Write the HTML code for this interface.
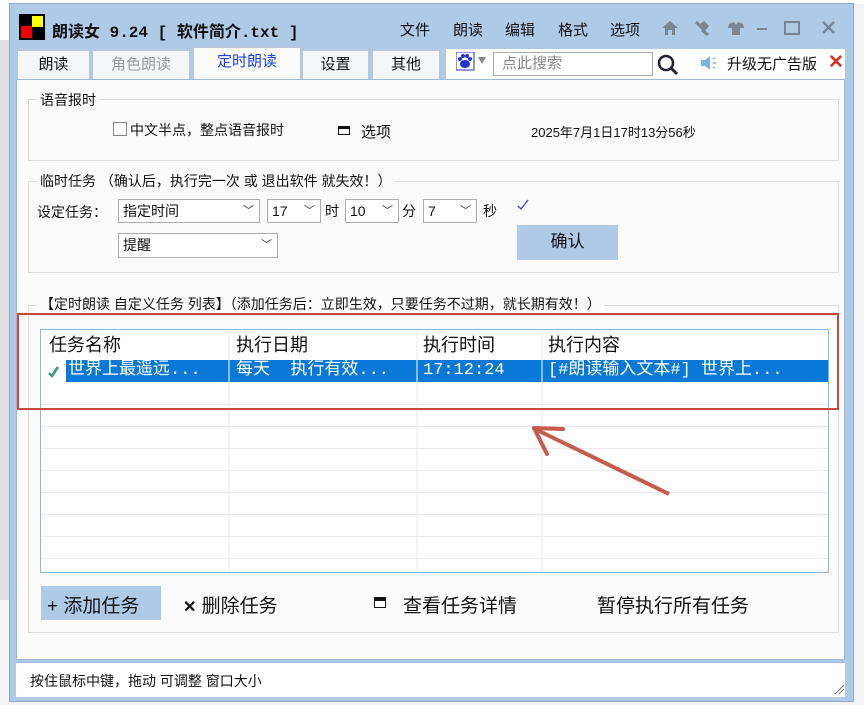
<!DOCTYPE html><html><head><meta charset="utf-8"><style>
*{margin:0;padding:0;box-sizing:border-box}
body{width:864px;height:705px;overflow:hidden;background:#f3f3f3;font-family:"Liberation Sans","Noto Sans CJK SC",sans-serif;font-size:15px;color:#111;position:relative}
.a{position:absolute;white-space:nowrap}
.win{left:9px;top:3px;width:845px;height:699px;background:#afcae7;border:1px solid #8fa9c6}
.panel{left:16px;top:79px;width:829px;height:581px;background:#fbfbfb;border:1px solid #9ab8d8}
.tab{top:50px;height:29px;background:#f4f6f9;border:1px solid #b8c8da;border-bottom:none;text-align:center;line-height:28px;font-size:15px}
.grp{border:1px solid #dcdcdc}
.gt{background:#fbfbfb;padding:0 3px;font-size:14px}
.sel{height:24px;background:#fff;border:1px solid #adadad;font-size:14px;line-height:22px;padding-left:4px}
.sel i{position:absolute;right:5px;top:0;font-style:normal;font-size:11px;color:#333}
.mono{font-family:"Liberation Mono","Noto Sans CJK SC",monospace}
.row{top:360px;height:22px;line-height:22px;font-size:17px;color:#fff}
</style></head><body>
<div class="a" style="left:0;top:0;width:864px;height:4px;background:#fff"></div>
<div class="a" style="left:0;top:4px;width:9px;height:36px;background:#fff"></div>
<div class="a" style="left:0;top:40px;width:9px;height:560px;background:#e0e0e0"></div>
<div class="a win"></div>
<svg class="a" style="left:19px;top:14px" width="26" height="26"><rect width="26" height="26" fill="#000"/><rect x="2" y="12" width="11" height="12" fill="#e00"/><rect x="13" y="2" width="11" height="11" fill="#ff0"/><rect x="13" y="13" width="6" height="11" fill="#000"/><rect x="2" y="2" width="6" height="6" fill="#000"/></svg>
<div class="a mono" style="left:52px;top:18px;font-size:16px;font-weight:bold">朗读女 9.24 [ 软件简介.txt ]</div>
<div class="a" style="left:400px;top:19px">文件</div>
<div class="a" style="left:453px;top:19px">朗读</div>
<div class="a" style="left:505px;top:19px">编辑</div>
<div class="a" style="left:558px;top:19px">格式</div>
<div class="a" style="left:610px;top:19px">选项</div>
<svg class="a" style="left:660px;top:18px" width="180" height="22" fill="#7a8591" stroke="#7a8591">
<path d="M2 10 L10 3 L18 10 L15 10 L15 17 L12 17 L12 12 L8 12 L8 17 L5 17 L5 10Z" stroke="none"/>
<path d="M36 4 L44 12 M40 8 L44 5 L47 8 L44 12 M42 12 L48 17" stroke-width="3"/>
<path d="M69 6 L74 4 L76 7 L78 4 L83 6 L84 10 L80 10 L80 17 L72 17 L72 10 L68 10Z" stroke="none"/>
<rect x="97" y="10" width="10" height="2" stroke="none"/>
<rect x="125" y="4" width="14" height="12" fill="none" stroke-width="2"/>
<path d="M163 4 L174 15 M174 4 L163 15" stroke-width="2.5"/></svg>
<div class="a tab" style="left:17px;width:73px">朗读</div>
<div class="a tab" style="left:92px;width:98px;color:#999">角色朗读</div>
<div class="a tab" style="left:193px;top:47px;height:33px;width:108px;background:#fbfbfb;color:#1a3fe0">定时朗读</div>
<div class="a tab" style="left:302px;width:67px">设置</div>
<div class="a tab" style="left:372px;width:68px">其他</div>
<div class="a" style="left:446px;top:49px;width:399px;height:30px;background:#fff"></div>
<svg class="a" style="left:456px;top:52px" width="36" height="20"><rect x="0" y="0" width="18" height="18" fill="#fff" stroke="#2233bb"/><g fill="#2233cc"><ellipse cx="9" cy="12" rx="5" ry="4"/><circle cx="4" cy="7" r="2"/><circle cx="7" cy="4" r="2"/><circle cx="11" cy="4" r="2"/><circle cx="14" cy="7" r="2"/></g><path d="M22 5 L30 5 L26 12Z" fill="#888"/></svg>
<div class="a" style="left:493px;top:52px;width:160px;height:24px;border:1px solid #aaa;background:#fff;color:#888;font-size:15px;line-height:22px;padding-left:8px">点此搜索</div>
<svg class="a" style="left:656px;top:53px" width="24" height="24"><circle cx="10" cy="10" r="7" fill="none" stroke="#223" stroke-width="2.5"/><path d="M15 15 L21 21" stroke="#223" stroke-width="3"/></svg>
<svg class="a" style="left:700px;top:55px" width="18" height="16"><path d="M1 5 L5 5 L10 1 L10 15 L5 11 L1 11Z" fill="#7fb4de"/><path d="M13 4 L15 3 M13 8 L16 8 M13 12 L15 13" stroke="#7fb4de" stroke-width="1.5"/></svg>
<div class="a" style="left:727px;top:53px">升级无广告版</div>
<div class="a" style="left:828px;top:51px;color:#e03020;font-size:19px;font-weight:bold">✕</div>
<div class="a panel"></div>
<div class="a grp" style="left:28px;top:99px;width:811px;height:62px"></div>
<div class="a gt" style="left:37px;top:90px">语音报时</div>
<div class="a" style="left:113px;top:122px;width:14px;height:14px;border:1px solid #888;background:#fff"></div>
<div class="a" style="left:130px;top:120px;font-size:14px">中文半点，整点语音报时</div>
<div class="a" style="left:338px;top:126px;width:12px;height:9px;border:1px solid #111;border-top:3px solid #111"></div>
<div class="a" style="left:361px;top:121px;font-size:15px">选项</div>
<div class="a" style="left:531px;top:122px;font-size:13px">2025年7月1日17时13分56秒</div>
<div class="a grp" style="left:28px;top:181px;width:811px;height:92px"></div>
<div class="a gt" style="left:37px;top:171px">临时任务 （确认后，执行完一次 或 退出软件 就失效！）</div>
<div class="a" style="left:37px;top:202px;font-size:14px">设定任务：</div>
<div class="a sel" style="left:118px;top:199px;width:142px">指定时间<i>﹀</i></div>
<div class="a sel" style="left:267px;top:199px;width:54px">17<i>﹀</i></div>
<div class="a" style="left:325px;top:201px;font-size:14px">时</div>
<div class="a sel" style="left:345px;top:199px;width:54px">10<i>﹀</i></div>
<div class="a" style="left:402px;top:201px;font-size:14px">分</div>
<div class="a sel" style="left:423px;top:199px;width:54px">7<i>﹀</i></div>
<div class="a" style="left:483px;top:201px;font-size:14px">秒</div>
<svg class="a" style="left:516px;top:197px" width="16" height="16"><path d="M2 9 L5 12 L12 3" stroke="#3344ee" fill="none" stroke-width="1.3"/></svg>
<div class="a" style="left:517px;top:225px;width:101px;height:35px;background:#afcae7;text-align:center;line-height:34px;font-size:17px">确认</div>
<div class="a sel" style="left:118px;top:233px;width:160px;height:25px">提醒<i>﹀</i></div>
<div class="a grp" style="left:28px;top:305px;width:811px;height:328px"></div>
<div class="a gt" style="left:37px;top:294px;font-size:14px">【定时朗读 自定义任务 列表】（添加任务后：立即生效，只要任务不过期，就长期有效！）</div>
<div class="a" style="left:40px;top:329px;width:789px;height:244px;background:#fff;border:1px solid #8ab8ea"></div>
<svg class="a" style="left:41px;top:330px" width="787" height="242">
<g stroke="#eaeaea"><path d="M188 0V242M376 0V242M501 0V242"/><path d="M0 74.5H787M0 96.5H787M0 118.5H787M0 140.5H787M0 162.5H787M0 184.5H787M0 206.5H787M0 228.5H787"/></g>
<rect x="25" y="30" width="762" height="22" fill="#0a78d6"/>
<g stroke="#fff"><path d="M188 30V52M376 30V52M501 30V52"/></g>
<path d="M8 43 L11 46 L17 37" stroke="#3a9a7a" stroke-width="2.5" fill="none"/>
</svg>
<div class="a" style="left:49px;top:333px;font-size:18px;line-height:24px">任务名称</div>
<div class="a" style="left:236px;top:333px;font-size:18px;line-height:24px">执行日期</div>
<div class="a" style="left:423px;top:333px;font-size:18px;line-height:24px">执行时间</div>
<div class="a" style="left:548px;top:333px;font-size:18px;line-height:24px">执行内容</div>
<div class="a mono row" style="left:68px">世界上最遥远...</div>
<div class="a mono row" style="left:236px">每天&nbsp;&nbsp;执行有效...</div>
<div class="a mono row" style="left:423px">17:12:24</div>
<div class="a mono row" style="left:548px">[#朗读输入文本#] 世界上...</div>
<div class="a" style="left:17px;top:313px;width:822px;height:97px;border:2px solid #c8483c"></div>
<svg class="a" style="left:525px;top:418px" width="150" height="82"><path d="M144 76 L12 12" stroke="#c65a4c" stroke-width="4"/><path d="M9 10 L38 11 M9 10 L22 36" stroke="#c65a4c" stroke-width="4" stroke-linecap="round"/></svg>
<div class="a" style="left:41px;top:586px;width:120px;height:34px;background:#afcae7"></div>
<div class="a" style="left:47px;top:591px;font-size:19px">+ 添加任务</div>
<div class="a" style="left:183px;top:591px;font-size:19px"><b style="font-size:16px">✕</b> 删除任务</div>
<div class="a" style="left:374px;top:597px;width:12px;height:11px;border:1.5px solid #111;border-top:4px solid #111"></div>
<div class="a" style="left:403px;top:591px;font-size:19px">查看任务详情</div>
<div class="a" style="left:597px;top:591px;font-size:19px">暂停执行所有任务</div>
<div class="a" style="left:16px;top:662px;width:829px;height:35px;background:#fff;border-top:1px solid #9ab8d8"></div>
<div class="a" style="left:30px;top:671px;font-size:14px">按住鼠标中键，拖动 可调整 窗口大小</div>
<svg class="a" style="left:833px;top:683px" width="12" height="12"><path d="M11 2 L2 11 M11 6 L6 11" stroke="#777"/></svg>
</body></html>
